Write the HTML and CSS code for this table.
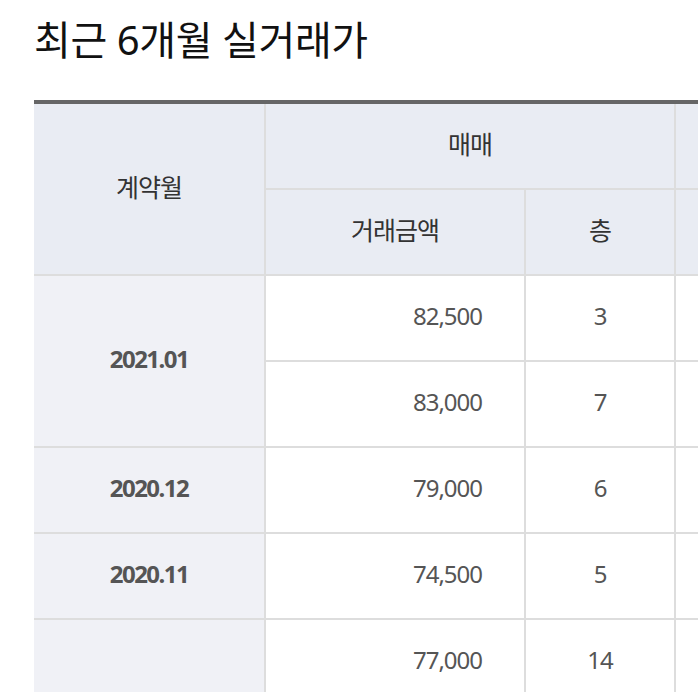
FILE: index.html
```html
<!DOCTYPE html>
<html lang="ko">
<head>
<meta charset="utf-8">
<title>최근 6개월 실거래가</title>
<link rel="stylesheet" href="styles.css">
</head>
<body>
<div class="page">
  <h2 class="title">최근 6개월 실거래가</h2>
  <div class="table-wrap">
    <table class="deals">
      <colgroup>
        <col class="c-month">
        <col class="c-price">
        <col class="c-floor">
        <col class="c-price">
        <col class="c-floor">
      </colgroup>
      <thead>
        <tr>
          <th rowspan="2">계약월</th>
          <th colspan="2">매매</th>
          <th colspan="2">전세</th>
        </tr>
        <tr>
          <th>거래금액</th>
          <th>층</th>
          <th>거래금액</th>
          <th>층</th>
        </tr>
      </thead>
      <tbody>
        <tr>
          <td class="month" rowspan="2">2021.01</td>
          <td class="price">82,500</td>
          <td class="floor">3</td>
          <td class="price"></td>
          <td class="floor"></td>
        </tr>
        <tr>
          <td class="price">83,000</td>
          <td class="floor">7</td>
          <td class="price"></td>
          <td class="floor"></td>
        </tr>
        <tr>
          <td class="month">2020.12</td>
          <td class="price">79,000</td>
          <td class="floor">6</td>
          <td class="price"></td>
          <td class="floor"></td>
        </tr>
        <tr>
          <td class="month">2020.11</td>
          <td class="price">74,500</td>
          <td class="floor">5</td>
          <td class="price"></td>
          <td class="floor"></td>
        </tr>
        <tr>
          <td class="month month-last" rowspan="2">2020.10</td>
          <td class="price">77,000</td>
          <td class="floor">14</td>
          <td class="price"></td>
          <td class="floor"></td>
        </tr>
        <tr>
          <td class="price">76,000</td>
          <td class="floor">9</td>
          <td class="price"></td>
          <td class="floor"></td>
        </tr>
      </tbody>
    </table>
  </div>
</div>
</body>
</html>
```
FILE: styles.css
```css
html, body {
  margin: 0;
  padding: 0;
  background: #fff;
}
body {
  font-family: "Noto Sans", "Noto Sans CJK KR", sans-serif;
  color: #333;
  overflow: hidden;
}
.page {
  padding: 16px 0 0 34px;
}
.title {
  margin: 0;
  font-size: 40px;
  line-height: 48px;
  font-weight: 400;
  color: #111;
  letter-spacing: -0.4px;
}
.table-wrap {
  margin-top: 36px;
  overflow: hidden;
}
.deals {
  border-collapse: separate;
  border-spacing: 0;
  table-layout: fixed;
  width: 1052px;
  border-top: 4px solid #666;
}
.c-month { width: 232px; }
.c-price { width: 260px; }
.c-floor { width: 150px; }
.deals th,
.deals td {
  box-sizing: border-box;
  height: 86px;
  padding: 0 0 6px;
  border-right: 2px solid #ddd;
  border-bottom: 2px solid #ddd;
  vertical-align: middle;
  font-size: 24px;
  letter-spacing: -1px;
}
.deals th {
  background: #e9ecf3;
  font-weight: 400;
  font-size: 25px;
  color: #333;
  text-align: center;
}
.deals td {
  color: #555;
  background: #fff;
}
.deals td.month {
  background: #f0f1f6;
  font-weight: 700;
  text-align: center;
  letter-spacing: -1.5px;
  color: #555;
}
.deals td.month-last {
  padding-bottom: 12px;
}
.deals td.price {
  text-align: right;
  padding-right: 42px;
}
.deals td.floor {
  text-align: center;
}
```
